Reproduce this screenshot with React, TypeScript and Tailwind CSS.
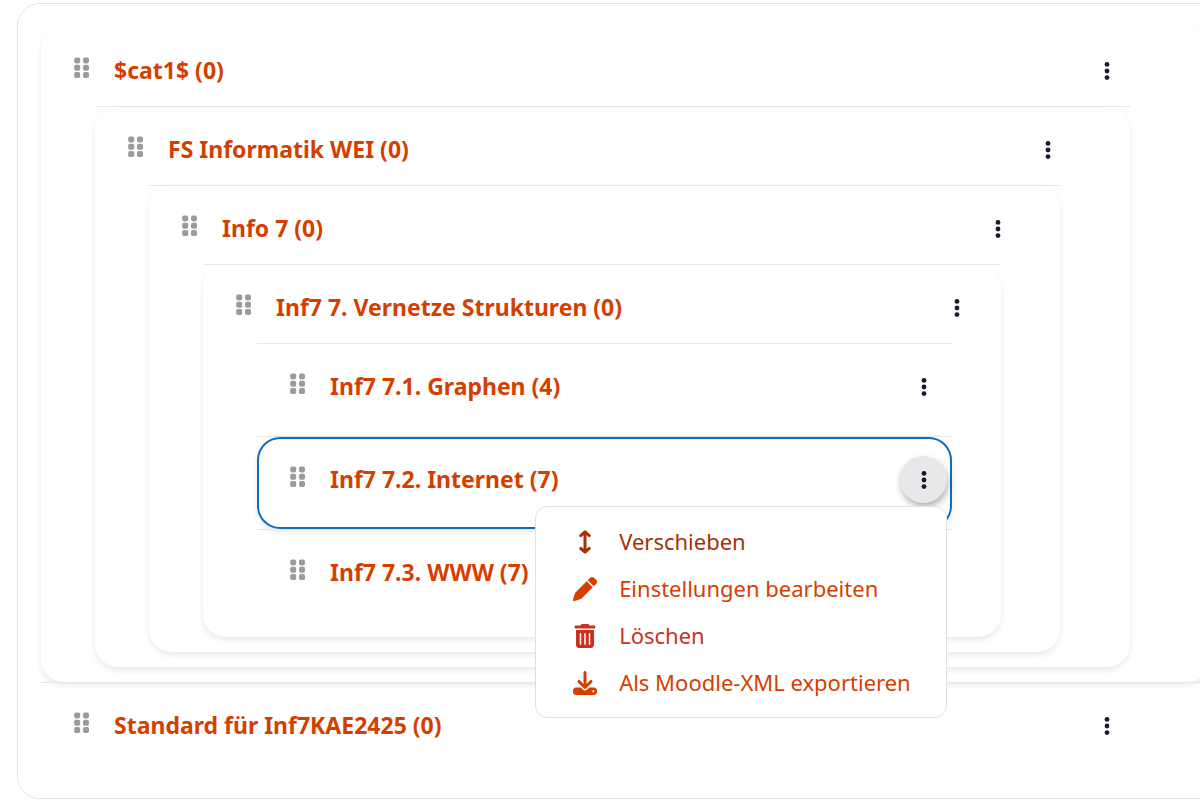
import React, { useState } from 'react';
import { FaDownload, FaPen, FaTrashCan } from 'react-icons/fa6';
import clsx from 'clsx';

interface Category {
  id: string;
  name: string;
  count: number;
  children?: Category[];
}

const categories: Category[] = [
  {
    id: 'cat1',
    name: '$cat1$',
    count: 0,
    children: [
      {
        id: 'fs-informatik',
        name: 'FS Informatik WEI',
        count: 0,
        children: [
          {
            id: 'info7',
            name: 'Info 7',
            count: 0,
            children: [
              {
                id: 'inf7-7',
                name: 'Inf7 7. Vernetze Strukturen',
                count: 0,
                children: [
                  { id: 'inf7-71', name: 'Inf7 7.1. Graphen', count: 4 },
                  { id: 'inf7-72', name: 'Inf7 7.2. Internet', count: 7 },
                  { id: 'inf7-73', name: 'Inf7 7.3. WWW', count: 7 },
                ],
              },
            ],
          },
        ],
      },
    ],
  },
  { id: 'standard', name: 'Standard für Inf7KAE2425', count: 0 },
];

function MoveIcon({ className }: { className?: string }) {
  return (
    <svg
      className={className}
      viewBox="0 0 24 24"
      fill="none"
      stroke="currentColor"
      strokeWidth="3"
      strokeLinecap="round"
      strokeLinejoin="round"
      aria-hidden="true"
    >
      <path d="M12 2v20M7.7 5.6 12 1.9l4.3 3.7M7.7 18.4l4.3 3.7 4.3-3.7" />
    </svg>
  );
}

const menuItems = [
  { label: 'Verschieben', icon: MoveIcon, color: 'text-[#a73100]' },
  { label: 'Einstellungen bearbeiten', icon: FaPen, color: 'text-[#d43f00]' },
  { label: 'Löschen', icon: FaTrashCan, color: 'text-[#ca3120]' },
  { label: 'Als Moodle-XML exportieren', icon: FaDownload, color: 'text-[#d43f00]' },
];

function GripIcon() {
  return (
    <svg width="16" height="22" viewBox="0 0 16 22" fill="currentColor" aria-hidden="true">
      {[0.4, 7.7, 15].map(y => (
        <React.Fragment key={y}>
          <rect x="0.2" y={y} width="6" height="6" rx="1.8" />
          <rect x="9" y={y} width="6" height="6" rx="1.8" />
        </React.Fragment>
      ))}
    </svg>
  );
}

function KebabIcon() {
  return (
    <svg width="6" height="20" viewBox="0 0 6 20" fill="currentColor" aria-hidden="true">
      <circle cx="3" cy="3.4" r="2.4" />
      <circle cx="3" cy="10" r="2.4" />
      <circle cx="3" cy="16.6" r="2.4" />
    </svg>
  );
}

function ActionMenu() {
  return (
    <div className="absolute right-0 top-[50px] z-10 w-[412px] rounded-xl border border-[#dfe0e2] bg-white py-[11px]">
      {menuItems.map(({ label, icon: Icon, color }) => (
        <a
          key={label}
          href="#"
          className={clsx('flex h-[47px] items-center gap-[22px] whitespace-nowrap pl-[37px] text-[22px]', color)}
        >
          <Icon className="size-6 shrink-0" />
          {label}
        </a>
      ))}
    </div>
  );
}

interface ItemProps {
  category: Category;
  openId: string | null;
  onToggle: (id: string) => void;
  first?: boolean;
}

function CategoryItem({ category, openId, onToggle, first }: ItemProps) {
  const { id, name, count, children } = category;
  const isOpen = openId === id;

  return (
    <li className={clsx('border-t', first ? 'border-transparent' : 'border-[#e6e7e9]')}>
      <div
        className={clsx(
          'rounded-[23px]',
          (children || isOpen) && 'shadow-[0_3px_6px_rgba(0,0,0,0.09)]',
          isOpen && 'ring-2 ring-inset ring-[#0f6cbf]',
          children ? 'pb-[15px]' : 'pb-[14px]'
        )}
      >
        {/* Header row */}
        <div className="flex items-center pb-3 pl-[33px] pr-[calc(15.8%-105px)] pt-[19px]">
          <button
            type="button"
            aria-label={`${name} ziehen`}
            className="mr-6 flex h-[42px] w-4 shrink-0 items-center self-start text-[#999b9c]"
          >
            <GripIcon />
          </button>
          <a href="#" className="whitespace-nowrap text-[23px] font-bold text-[#d43f00]">
            {name} ({count})
          </a>
          <div className="relative ml-auto">
            <button
              type="button"
              aria-label={`Aktionen für ${name}`}
              aria-expanded={isOpen}
              onClick={() => onToggle(id)}
              className={clsx(
                'flex size-[47px] items-center justify-center rounded-full text-[#1a1a2e]',
                isOpen && 'bg-[#e8e8ea] shadow-[1px_4px_7px_rgba(0,0,0,0.3)]'
              )}
            >
              <KebabIcon />
            </button>
            {isOpen && <ActionMenu />}
          </div>
        </div>

        {children && (
          <ul className="pl-[54px] pr-[calc(8.333%-17px)]">
            {children.map(child => (
              <CategoryItem key={child.id} category={child} openId={openId} onToggle={onToggle} />
            ))}
          </ul>
        )}
      </div>
    </li>
  );
}

export default function App() {
  const [openId, setOpenId] = useState<string | null>('inf7-72');

  const handleToggle = (id: string) => {
    setOpenId(prev => (prev === id ? null : id));
  };

  return (
    <main
      lang="de"
      className="overflow-hidden bg-white pb-2 pl-[17px] pt-[3px] font-['Noto_Sans','Open_Sans',sans-serif]"
    >
      {/* The card runs past the right edge of the window */}
      <div className="-mr-[34px] rounded-[23px] border border-[#e3e4e6] p-[23px]">
        <ul>
          {categories.map((category, index) => (
            <CategoryItem
              key={category.id}
              category={category}
              openId={openId}
              onToggle={handleToggle}
              first={index === 0}
            />
          ))}
        </ul>
      </div>
    </main>
  );
}
